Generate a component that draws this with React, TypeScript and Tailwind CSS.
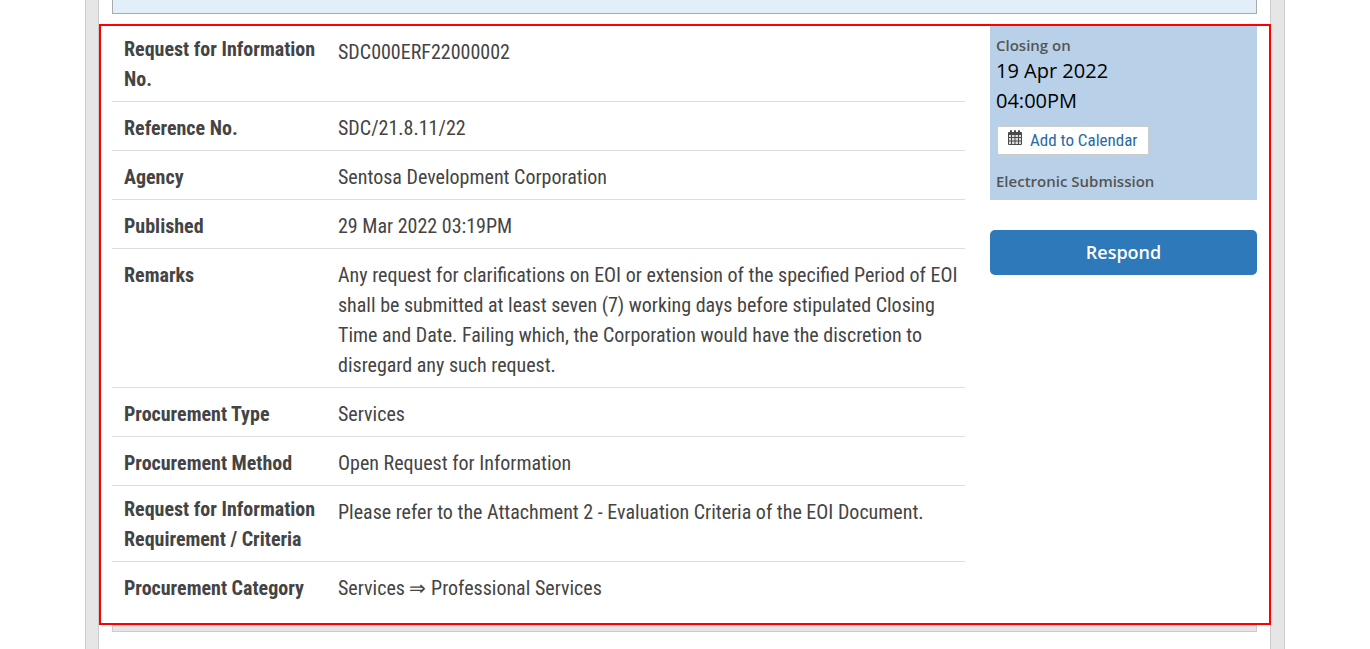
type Detail = { label: string; value: string; tallLabel?: boolean };

const details: Detail[] = [
  { label: 'Request for Information No.', value: 'SDC000ERF22000002', tallLabel: true },
  { label: 'Reference No.', value: 'SDC/21.8.11/22' },
  { label: 'Agency', value: 'Sentosa Development Corporation' },
  { label: 'Published', value: '29 Mar 2022 03:19PM' },
  {
    label: 'Remarks',
    value:
      'Any request for clarifications on EOI or extension of the specified Period of EOI shall be submitted at least seven (7) working days before stipulated Closing Time and Date. Failing which, the Corporation would have the discretion to disregard any such request.',
  },
  { label: 'Procurement Type', value: 'Services' },
  { label: 'Procurement Method', value: 'Open Request for Information' },
  {
    label: 'Request for Information Requirement / Criteria',
    value: 'Please refer to the Attachment 2 - Evaluation Criteria of the EOI Document.',
    tallLabel: true,
  },
  { label: 'Procurement Category', value: 'Services ⇒ Professional Services' },
];

function CalendarIcon() {
  return (
    <svg width="14" height="15" viewBox="0 0 14 15" className="mb-1.5 shrink-0" aria-hidden="true">
      <path d="M1 2h12q1 0 1 1v11q0 1-1 1H1q-1 0-1-1V3q0-1 1-1z" fill="#4a4a4a" />
      <path d="M2 1q0-1 1-1t1 1v2H2zM6 1q0-1 1-1t1 1v2H6zM10 1q0-1 1-1t1 1v2h-2z" fill="#4a4a4a" />
      <path
        d="M1 5h2v2H1zM4 5h2.500v2H4zM7.500 5H10v2H7.500zM11 5h2v2h-2zM1 8h2v2.500H1zM4 8h2.500v2.500H4zM7.500 8H10v2.500H7.500zM11 8h2v2.500h-2zM1 11.500h2V14H1zM4 11.500h2.500V14H4zM7.500 11.500H10V14H7.500zM11 11.500h2V14h-2z"
        fill="#ddd"
      />
    </svg>
  );
}

function Details() {
  return (
    <dl className="min-w-0 flex-1 divide-y divide-[#ddd] font-['Roboto_Condensed','Roboto',sans-serif] text-[20px] leading-[30px] text-[#444]">
      {details.map((d) => (
        <div key={d.label} className="flex pl-3">
          <dt className={`w-[214px] shrink-0 pr-5 font-bold ${d.tallLabel ? 'pt-2 pb-[7px]' : 'pt-[11px] pb-[7px]'}`}>
            {d.label}
          </dt>
          <dd className="min-w-0 flex-1 pt-[11px] pb-[7px]">{d.value}</dd>
        </div>
      ))}
    </dl>
  );
}

function ClosingPanel() {
  return (
    <aside className="w-[267px] shrink-0 font-['Open_Sans',sans-serif]">
      <div className="bg-[#b9d1e8] px-1.5 pt-2 pb-2">
        <p className="text-[15px] leading-[22px] font-semibold text-[#555]">Closing on</p>
        <p className="text-[20px] leading-[30px] text-black">
          19 Apr 2022
          <br />
          04:00PM
        </p>
        <button
          type="button"
          className="mt-[10px] ml-px flex h-[29px] items-center gap-2 border border-[#ccc] bg-white px-[10px] font-['Roboto_Condensed','Roboto',sans-serif] text-[17px] text-[#286aa6]"
        >
          <CalendarIcon />
          Add to Calendar
        </button>
        <p className="mt-[15px] text-[15px] leading-[22px] font-semibold text-[#555]">Electronic Submission</p>
      </div>
      <button
        type="button"
        className="mt-[30px] h-[45px] w-full rounded-[5px] bg-[#2e79b9] text-[18px] font-semibold text-white"
      >
        Respond
      </button>
    </aside>
  );
}

export default function App() {
  return (
    <div className="flex min-h-screen justify-center bg-white">
      <div className="flex w-full max-w-[1200px]">
        <div className="w-[14px] shrink-0 border-x border-[#ccc] bg-[#e6e6e6]" />
        <main className="min-w-0 flex-1">
          <div className="mx-[13px] h-[14px] border border-t-0 border-[#aaa] bg-[#e2eff9]" />
          <section className="relative mt-[10px] -mr-px flex gap-[25px] border-2 border-[#f00] bg-white pr-3 pb-[13px] pl-[11px]">
            <Details />
            <ClosingPanel />
          </section>
          <div className="mx-[13px] h-[7px] border border-[#ccc] bg-[#e6e6e6]" />
        </main>
        <div className="w-[15px] shrink-0 border-x border-[#ccc] bg-[#e6e6e6]" />
      </div>
    </div>
  );
}
